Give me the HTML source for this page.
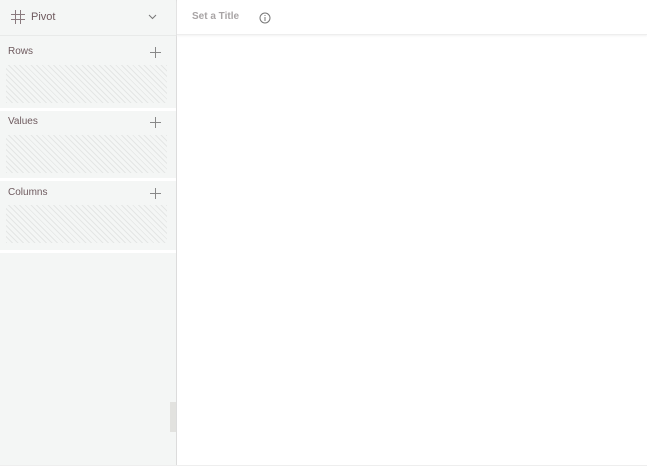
<!DOCTYPE html>
<html><head><style>
body{margin:0;width:647px;height:466px;overflow:hidden;background:#fff;font-family:"Liberation Sans",sans-serif;position:relative}
.side{position:absolute;left:0;top:0;width:176px;height:465px;background:#f4f6f5;border-right:1px solid #dcdcdc}
.hdr{position:absolute;left:0;top:0;width:176px;height:35px;border-bottom:1px solid #e8eae9}
.lbl{position:absolute;left:8px;font-size:10px;color:#6e5a5e}
.plus{position:absolute;left:150px;width:11px;height:11px}
.plus:before{content:"";position:absolute;left:5px;top:0;width:1px;height:11px;background:#888}
.plus:after{content:"";position:absolute;left:0;top:5px;width:11px;height:1px;background:#888}
.box{position:absolute;left:6px;width:161px;height:38px;background:repeating-linear-gradient(45deg,#e4e6e5 0 1px,#f4f6f5 1px 4px)}
.gap{position:absolute;left:0;width:176px;height:3px;background:#fff}
</style></head><body>
<div class="side">
<div class="hdr">
<svg style="position:absolute;left:11px;top:10px" width="14" height="14" viewBox="0 0 14 14" stroke="#8a7a7e" stroke-width="1" fill="none"><path d="M4.5 0V14M9.5 0V14M0 4.5H14M0 9.5H14"/></svg>
<div style="position:absolute;left:31px;top:11px;font-size:11px;color:#6e5a5e">Pivot</div>
<svg style="position:absolute;left:148px;top:14px" width="9" height="6" viewBox="0 0 9 6" stroke="#777" fill="none"><path d="M1 1L4.5 4.5L8 1"/></svg>
</div>
<div class="lbl" style="top:46px">Rows</div><div class="plus" style="top:47px"></div>
<div class="box" style="top:65px"></div>
<div class="gap" style="top:108px"></div>
<div class="lbl" style="top:116px">Values</div><div class="plus" style="top:117px"></div>
<div class="box" style="top:135px"></div>
<div class="gap" style="top:178px"></div>
<div class="lbl" style="top:187px">Columns</div><div class="plus" style="top:188px"></div>
<div class="box" style="top:205px"></div>
<div class="gap" style="top:250px"></div>
<div style="position:absolute;left:170px;top:402px;width:6px;height:30px;background:#e2e2df"></div>
</div>
<div style="position:absolute;left:177px;top:0;width:470px;height:34px;border-bottom:1px solid #eee;box-shadow:0 1px 2px #f2f2f2"></div>
<div style="position:absolute;left:192px;top:11px;font-size:10px;font-weight:bold;color:#a8a4a5">Set a Title</div>
<svg style="position:absolute;left:259px;top:12px" width="12" height="12" viewBox="0 0 12 12" fill="none" stroke="#777"><circle cx="6" cy="6" r="5"/><path d="M6 5V9M6 3V4"/></svg>
<div style="position:absolute;left:0;top:465px;width:647px;height:1px;background:#eee"></div>
</body></html>
